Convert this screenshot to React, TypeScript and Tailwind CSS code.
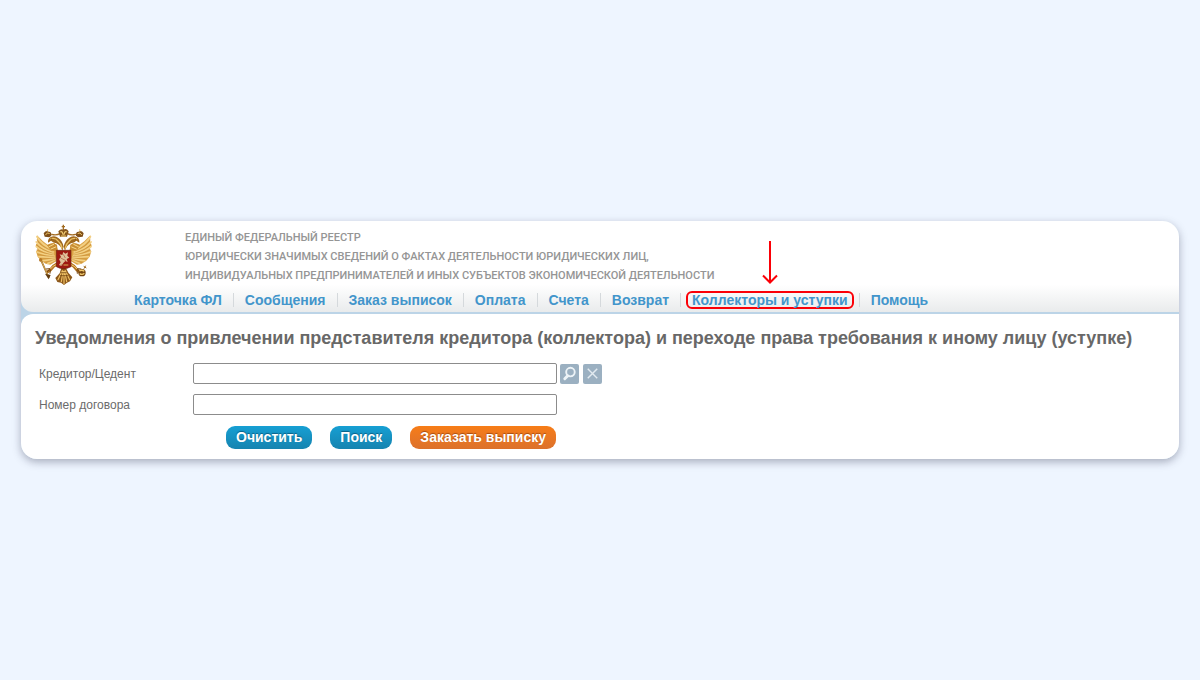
import React from 'react';

interface NavItem {
  label: string;
  active?: boolean;
}

const NAV_ITEMS: NavItem[] = [
  { label: 'Карточка ФЛ' },
  { label: 'Сообщения' },
  { label: 'Заказ выписок' },
  { label: 'Оплата' },
  { label: 'Счета' },
  { label: 'Возврат' },
  { label: 'Коллекторы и уступки', active: true },
  { label: 'Помощь' },
];

// One wing, head and small crown; the other half is mirrored
const EagleHalf: React.FC = () => (
  <g strokeLinecap="round" strokeLinejoin="round">
    <path d="M66 62 L84 80 L98 90 L118 84 L128 104 L124 140 L106 150 L92 147 L78 138 L68 126 L63 110 L68 104 L62 92 L67 84 Z" fill="#dca548" />
    <g stroke="#f3d083" strokeWidth="5.5" fill="none">
      <path d="M66 66 Q80 90 112 104" />
      <path d="M64 82 Q80 102 114 112" />
      <path d="M64 96 Q82 112 114 118" />
      <path d="M66 112 Q86 120 116 123" />
      <path d="M72 126 Q92 128 118 127" />
      <path d="M83 138 Q100 136 120 131" />
      <path d="M98 146 Q110 142 122 134" />
    </g>
    <g stroke="#bd8332" strokeWidth="1.2" fill="none">
      <path d="M66 76 Q80 98 112 109" />
      <path d="M64 90 Q82 108 114 116" />
      <path d="M66 105 Q86 117 115 121" />
      <path d="M70 120 Q92 125 118 126" />
      <path d="M78 133 Q98 133 120 130" />
      <path d="M92 144 Q108 140 122 133" />
    </g>
    <path d="M96 92 Q112 80 126 90 L128 108 L108 108 Z" fill="#c98d33" />
    <path d="M102 96 L116 89 M108 103 L122 97" stroke="#f6d98c" strokeWidth="3" />
    {/* neck and head */}
    <path d="M142 108 Q137 92 124 86 Q114 84 108 78 L99 84 Q98 73 106 68 Q119 61 130 70 Q142 78 146 96 Z" fill="#a0691f" />
    <path d="M108 72 Q122 69 129 79 Q138 86 141 100" stroke="#eac063" strokeWidth="4" fill="none" />
    <circle cx="110" cy="73" r="1.7" fill="#4a260b" />
    {/* small crown */}
    <path d="M89 66 L86 56 Q93 46 101 51 Q110 50 109 63 L103 68 Z" fill="#80501a" />
    <path d="M92 60 Q96 51 103 56 M97 49 L98 45" stroke="#edc469" strokeWidth="3" fill="none" />
    <path d="M110 59 Q125 63 136 56" stroke="#a46d24" strokeWidth="4" fill="none" />
    {/* leg */}
    <path d="M126 148 Q116 152 107 165 L98 171" stroke="#b57422" strokeWidth="9" fill="none" />
    <path d="M123 150 Q114 153 107 162" stroke="#f1cb70" strokeWidth="3" fill="none" />
    <path d="M104 162 L94 163 M104 165 L94 173 M106 166 L105 176" stroke="#74440f" strokeWidth="3" />
  </g>
);

const Emblem: React.FC = () => (
  <svg viewBox="60 28 174 186" className="h-[62px] w-[58px]" role="img" aria-label="Герб">
    <EagleHalf />
    <g transform="translate(292 0) scale(-1 1)">
      <EagleHalf />
    </g>
    {/* tail */}
    <path d="M139 160 L153 160 L160 174 L172 188 L165 200 L156 204 L147 211 L138 204 L127 202 L121 190 L134 176 Z" fill="#8b571a" />
    <path d="M142 168 L129 195 M144 170 L139 201 M147 170 L147 207 M149 170 L155 201 M151 168 L164 195" stroke="#eec166" strokeWidth="3.5" strokeLinecap="round" />
    <path d="M138 174 L155 174 M135 183 L159 183" stroke="#613608" strokeWidth="2" />
    {/* central crown */}
    <path d="M135 66 L130 50 Q138 41 145 45 Q154 40 161 50 L156 66 Z" fill="#85551a" />
    <path d="M136 52 Q142 48 144 60 M155 52 Q149 48 147 60 M138 64 L153 64" stroke="#f2cd73" strokeWidth="3.5" fill="none" />
    <path d="M145 30 L145 46 M140 36 L150 36" stroke="#a26b20" strokeWidth="4" />
    {/* sceptre */}
    <path d="M77 134 L101 188" stroke="#93601d" strokeWidth="5" strokeLinecap="round" />
    <path d="M77 134 L99 183" stroke="#efc970" strokeWidth="2" />
    <circle cx="77" cy="136" r="5" fill="#b57725" />
    <path d="M90 177 L107 181 L101 194 Z" fill="#603b10" />
    {/* orb */}
    <circle cx="201" cy="174" r="11" fill="#73430f" />
    <path d="M193 169 Q200 164 208 170 M194 177 Q202 182 208 176" stroke="#f0c86a" strokeWidth="4" fill="none" />
    <path d="M207 162 L212 153 M206 155 L214 160" stroke="#a26b20" strokeWidth="3" />
    {/* shield */}
    <path d="M124 107 H168 V156 Q157 162 146 162 Q134 162 124 156 Z" fill="#9d1a12" stroke="#6d220b" strokeWidth="2" />
    <path d="M132 151 L137 143 L132 134 L138 127 L134 119 L142 121 L145 112 L151 117 L159 113 L157 123 L163 129 L155 133 L158 142 L151 139 L145 145 L139 154 Z" fill="#dfc19a" />
    <path d="M137 130 L153 138 M145 119 L151 130 M137 151 H158" stroke="#a85436" strokeWidth="2" />
    <path d="M146 151 H160" stroke="#d9a24c" strokeWidth="3" />
  </svg>
);

const Header: React.FC = () => (
  <header className="rounded-bl-xl bg-linear-to-b from-white from-70% to-[#e9ebec]">
    <div className="flex h-[70px] items-start pl-3.5 pt-[3px]">
      <Emblem />
      <p className="ml-[92px] mt-1 whitespace-nowrap font-[Roboto,Arial,sans-serif] text-[11px] font-medium leading-[19px] text-[#959595]">
        ЕДИНЫЙ ФЕДЕРАЛЬНЫЙ РЕЕСТР
        <br />
        ЮРИДИЧЕСКИ ЗНАЧИМЫХ СВЕДЕНИЙ О ФАКТАХ ДЕЯТЕЛЬНОСТИ ЮРИДИЧЕСКИХ ЛИЦ,
        <br />
        ИНДИВИДУАЛЬНЫХ ПРЕДПРИНИМАТЕЛЕЙ И ИНЫХ СУБЪЕКТОВ ЭКОНОМИЧЕСКОЙ ДЕЯТЕЛЬНОСТИ
      </p>
    </div>
    <nav className="flex h-[21px] items-start pl-[102px]">
      {NAV_ITEMS.map((item, i) => (
        <div key={item.label} className="flex h-[18px] items-center">
          {i > 0 && <span className="h-3.5 w-px bg-[#d5d9dc]" />}
          {item.active ? (
            <div className="relative mx-[5px]">
              <a
                href="#"
                className="block rounded-md border-2 border-[#fb0007] px-1 text-sm/[14px] font-bold text-[#4295cb]"
              >
                {item.label}
              </a>
              <svg
                viewBox="0 0 16 43"
                className="absolute bottom-full left-1/2 mb-[7px] h-[43px] w-4 -translate-x-1/2"
                fill="none"
                stroke="#fb0007"
                strokeWidth="2"
                aria-hidden="true"
              >
                <path d="M8 0 V41 M1 34.500 L8 41.500 L15 34.500" />
              </svg>
            </div>
          ) : (
            <a href="#" className="px-[11px] text-sm/[18px] font-bold text-[#4295cb]">
              {item.label}
            </a>
          )}
        </div>
      ))}
    </nav>
  </header>
);

const inputClass =
  'h-[21px] w-[364px] rounded-xs border border-[#8c8c8c] bg-white px-1 text-xs text-[#555] outline-none';
const iconButtonClass = 'flex h-5 w-[19px] items-center justify-center rounded-xs bg-[#9bb0c1]';
const blueButtonClass =
  'h-[23px] rounded-[9px] bg-linear-to-b from-[#169fd3] to-[#1684b0] px-2.5 text-sm/[23px] font-bold text-white text-shadow-[0_-1px_1px_#0b5f85]';

const SearchForm: React.FC = () => (
  <form className="pl-[18px] text-xs text-[#6b6b6b]" onSubmit={(e) => e.preventDefault()}>
    <div className="flex h-[21px] items-center">
      <label htmlFor="creditor" className="w-[154px]">
        Кредитор/Цедент
      </label>
      <input id="creditor" type="text" className={inputClass} />
      <button type="button" aria-label="Найти" className={`${iconButtonClass} ml-[3px]`}>
        <svg viewBox="0 0 20 20" className="size-[19px]" fill="none" stroke="#edf3f7" aria-hidden="true">
          <circle cx="11" cy="8.500" r="4.500" strokeWidth="2" />
          <path d="M8 12.500 L5 15.500" strokeWidth="3" strokeLinecap="round" />
        </svg>
      </button>
      <button type="button" aria-label="Очистить поле" className={`${iconButtonClass} ml-1`}>
        <svg viewBox="0 0 20 20" className="size-[19px]" fill="none" stroke="#e2eaf0" strokeWidth="1.500" aria-hidden="true">
          <path d="M5 5 L15 15 M15 5 L5 15" />
        </svg>
      </button>
    </div>
    <div className="mt-2.5 flex h-[21px] items-center">
      <label htmlFor="contract" className="w-[154px]">
        Номер договора
      </label>
      <input id="contract" type="text" className={inputClass} />
    </div>
    <div className="mt-[11px] flex gap-[18px] pl-[187px]">
      <button type="reset" className={blueButtonClass}>
        Очистить
      </button>
      <button type="submit" className={blueButtonClass}>
        Поиск
      </button>
      <button
        type="button"
        className="h-[23px] rounded-[9px] bg-linear-to-b from-[#f77d16] to-[#dc712b] px-2.5 text-sm/[23px] font-bold text-white text-shadow-[0_-1px_1px_#a54b10]"
      >
        Заказать выписку
      </button>
    </div>
  </form>
);

const App: React.FC = () => {
  return (
    <div className="flex min-h-screen items-center bg-[#eef5ff] px-[21px] font-['Liberation_Sans',Arial,sans-serif]">
      <div className="w-full rounded-2xl bg-white shadow-[0_3px_9px_rgba(60,65,90,0.4)]">
        <div className="overflow-hidden rounded-2xl bg-[#bcd4e7]">
          <Header />
          <main className="mt-0.5 rounded-tl-xl bg-white pb-2.5 pt-3">
            <h1 className="mb-[13px] pl-3.5 text-lg/6 font-bold text-[#686868]">
              Уведомления о привлечении представителя кредитора (коллектора) и переходе права требования к иному лицу
              (уступке)
            </h1>
            <SearchForm />
          </main>
        </div>
      </div>
    </div>
  );
};

export default App;
